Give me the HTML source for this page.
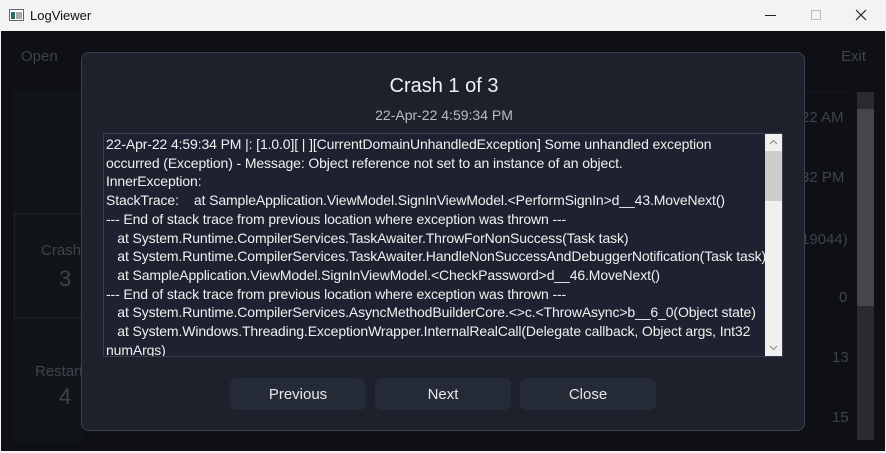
<!DOCTYPE html>
<html><head><style>
*{margin:0;padding:0;box-sizing:border-box}
body{width:886px;height:453px;overflow:hidden;background:#f3f3f3;font-family:"Liberation Sans",sans-serif;position:relative}
.tb{position:absolute;left:0;top:0;width:886px;height:31px;background:#f3f3f3}
.main{position:absolute;left:1px;top:31px;width:884px;height:420px;background:#0e1015}
.abs{position:absolute}
.bg{color:#3f434b;font-size:15px}
.modal{position:absolute;left:81px;top:52px;width:724px;height:379px;background:#1d212c;border:1px solid #3a3f4b;border-radius:8px}
.tx{position:absolute;left:103px;top:133px;width:680px;height:224px;background:#1e2230;border:1px solid #3a3f4e;overflow:hidden}
.tx pre{font-family:"Liberation Sans",sans-serif;font-size:14px;line-height:18.7px;color:#f0f0f0;position:absolute;left:2px;top:1px;white-space:pre;letter-spacing:-0.12px}
.sb{position:absolute;right:0;top:0;width:17px;height:222px;background:#f0f0f0}
.btn{position:absolute;top:378px;width:136px;height:32px;background:#252a37;border-radius:7px;color:#e8e8e8;font-size:15px;text-align:center;line-height:33px}
</style></head><body>
<div class="tb">
 <svg class="abs" style="left:9px;top:9px" width="15" height="12"><rect x="0.5" y="0.5" width="14" height="11" fill="#fff" stroke="#666"/><rect x="2" y="3" width="4" height="7" fill="#2d6b6b"/><rect x="7" y="3" width="6" height="7" fill="#aaa"/></svg>
 <div class="abs" style="left:30px;top:8px;font-size:13px;color:#111">LogViewer</div>
 <div class="abs" style="left:765px;top:15px;width:11px;height:1px;background:#222"></div>
 <div class="abs" style="left:811px;top:10px;width:10px;height:10px;border:1px solid #bbb"></div>
 <svg class="abs" style="left:855px;top:9px" width="12" height="12"><path d="M1 1L11 11M11 1L1 11" stroke="#222" stroke-width="1.2"/></svg>
</div>
<div class="main">
 <div class="abs bg" style="left:20px;top:17px">Open</div>
 <div class="abs bg" style="left:840px;top:17px">Exit</div>
 <div class="abs" style="left:10px;top:60px;width:840px;height:1px;background:#15181e"></div>
 <div class="abs" style="left:12px;top:62px;width:70px;height:350px;background:#111419"></div>
 <div class="abs bg" style="left:40px;top:211px">Crashe</div>
 <div class="abs" style="left:58px;top:235px;color:#3f434b;font-size:22px">3</div>
 <div class="abs" style="left:13px;top:182px;width:105px;height:105px;border:1px dotted #2e3036"></div>
 <div class="abs bg" style="left:34px;top:332px">Restart</div>
 <div class="abs" style="left:58px;top:353px;color:#3f434b;font-size:22px">4</div>
 <div class="abs bg" style="left:800px;top:78px">22 AM</div>
 <div class="abs bg" style="left:800px;top:138px">32 PM</div>
 <div class="abs bg" style="left:800px;top:200px">19044)</div>
 <div class="abs bg" style="left:838px;top:258px">0</div>
 <div class="abs bg" style="left:831px;top:318px">13</div>
 <div class="abs bg" style="left:831px;top:378px">15</div>
 <div class="abs" style="left:856px;top:61px;width:17px;height:348px;background:#2a2b2e"></div>
 <div class="abs" style="left:856px;top:78px;width:17px;height:197px;background:#454649"></div>
</div>
<div class="modal"></div>
<div class="abs" style="left:81px;top:75px;width:726px;text-align:center;color:#f2f2f2;font-size:20px">Crash 1 of 3</div>
<div class="abs" style="left:81px;top:107px;width:726px;text-align:center;color:#b8bcc4;font-size:14px">22-Apr-22 4:59:34 PM</div>
<div class="tx"><pre>22-Apr-22 4:59:34 PM |: [1.0.0][ | ][CurrentDomainUnhandledException] Some unhandled exception
occurred (Exception) - Message: Object reference not set to an instance of an object.
InnerException:
StackTrace:    at SampleApplication.ViewModel.SignInViewModel.&lt;PerformSignIn&gt;d__43.MoveNext()
--- End of stack trace from previous location where exception was thrown ---
   at System.Runtime.CompilerServices.TaskAwaiter.ThrowForNonSuccess(Task task)
   at System.Runtime.CompilerServices.TaskAwaiter.HandleNonSuccessAndDebuggerNotification(Task task)
   at SampleApplication.ViewModel.SignInViewModel.&lt;CheckPassword&gt;d__46.MoveNext()
--- End of stack trace from previous location where exception was thrown ---
   at System.Runtime.CompilerServices.AsyncMethodBuilderCore.&lt;&gt;c.&lt;ThrowAsync&gt;b__6_0(Object state)
   at System.Windows.Threading.ExceptionWrapper.InternalRealCall(Delegate callback, Object args, Int32
numArgs)</pre>
 <div class="sb"><div class="abs" style="left:0;top:17px;width:17px;height:50px;background:#cdcdcd"></div>
 <svg class="abs" style="left:4px;top:5px" width="9" height="6"><path d="M1 5L4.5 1.5L8 5" stroke="#888" fill="none"/></svg>
 <svg class="abs" style="left:4px;top:211px" width="9" height="6"><path d="M1 1L4.5 4.5L8 1" stroke="#888" fill="none"/></svg></div>
</div>
<div class="btn" style="left:230px">Previous</div>
<div class="btn" style="left:375px">Next</div>
<div class="btn" style="left:520px">Close</div>
</body></html>
